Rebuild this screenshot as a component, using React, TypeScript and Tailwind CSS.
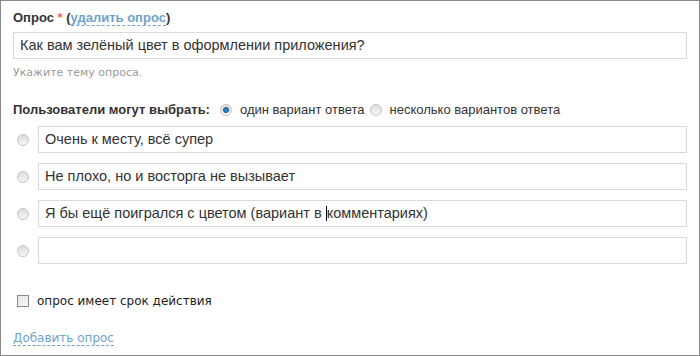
const arial = "font-['Liberation_Sans',Arial,sans-serif]";
const verdana = "font-['DejaVu_Sans',Verdana,sans-serif]";

function Radio({ checked = false }: { checked?: boolean }) {
  return (
    <span className="flex h-[12px] w-[12px] shrink-0 items-center justify-center rounded-full border border-[#c4c4c4] bg-gradient-to-b from-[#dcdcdc] to-[#f6f6f6]">
      {checked && (
        <span className="h-[6px] w-[6px] rounded-full border border-[#0d4f8a] bg-[#2f86cf]" />
      )}
    </span>
  );
}

function Field({ children }: { children?: React.ReactNode }) {
  return (
    <div
      className={`flex h-[27px] flex-1 items-center whitespace-pre border border-[#d9d9d9] bg-white px-[6px] text-[14.5px] text-[#333] ${arial}`}
    >
      {children}
    </div>
  );
}

const options = [
  'Очень к месту, всё супер',
  'Не плохо, но и восторга не вызывает',
  null,
  '',
];

export default function App() {
  return (
    <div className="h-[356px] w-[700px] border border-[#888] bg-white px-[12px] pt-[9px]">
      <div className={`text-[13px] font-bold leading-4 text-[#333] ${arial}`}>
        Опрос <span className="text-[#ec7350]">*</span> (
        <span className="border-b border-dashed border-[#6ea3cc] text-[#6ea3cc]">удалить опрос</span>)
      </div>

      <div className="mt-[6px] flex">
        <Field>Как вам зелёный цвет в оформлении приложения?</Field>
      </div>
      <div className={`mt-[7px] text-[11px] leading-[14px] text-[#999] ${verdana}`}>
        Укажите тему опроса.
      </div>

      <div className={`mt-[22px] flex items-center text-[13px] leading-4 text-[#333] ${arial}`}>
        <span className="font-bold">Пользователи могут выбрать:</span>
        <span className="ml-[10px]">
          <Radio checked />
        </span>
        <span className="ml-[8px]">один вариант ответа</span>
        <span className="ml-[5px]">
          <Radio />
        </span>
        <span className="ml-[8px]">несколько вариантов ответа</span>
      </div>

      <div className="mt-[8px] flex flex-col gap-[10px]">
        {options.map((text, i) => (
          <div key={i} className="flex items-center">
            <span className="ml-[4px] mr-[9px]">
              <Radio />
            </span>
            <Field>
              {text === null ? (
                <>
                  {'Я бы ещё поигрался с цветом (вариант в '}
                  <span className="h-[15px] w-px bg-black" />
                  комментариях)
                </>
              ) : (
                text
              )}
            </Field>
          </div>
        ))}
      </div>

      <div className={`mt-[29px] flex items-center text-[12px] leading-4 text-[#222] ${verdana}`}>
        <span className="ml-[4px] mr-[8px] h-[12px] w-[12px] border border-[#8a8a8a] bg-gradient-to-br from-[#e2e2e2] to-[#fafafa]" />
        опрос имеет срок действия
      </div>

      <div className={`mt-[21px] text-[12px] leading-4 ${verdana}`}>
        <span className="border-b border-dashed border-[#6ea3cc] text-[#6ea3cc]">Добавить опрос</span>
      </div>
    </div>
  );
}
